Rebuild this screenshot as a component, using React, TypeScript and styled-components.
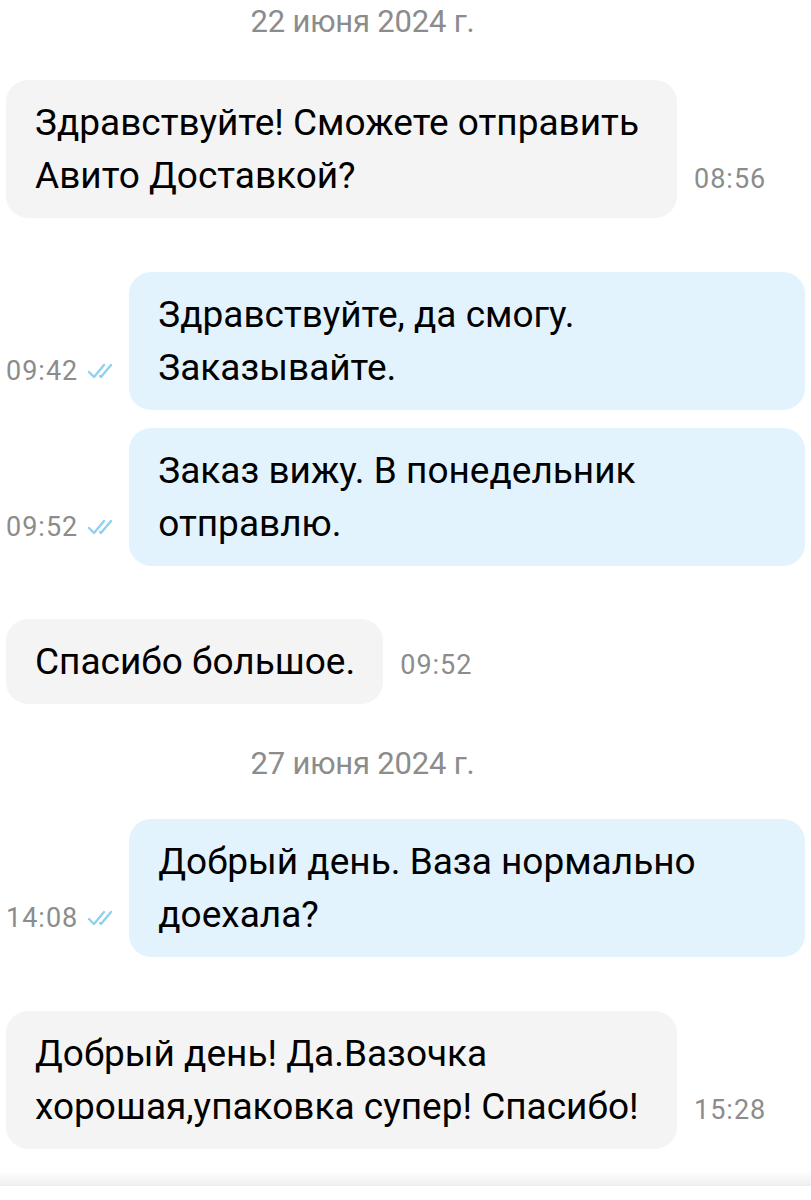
import * as React from "react";
import styled, { createGlobalStyle } from "styled-components";

const GlobalStyle = createGlobalStyle`
    html, body {
        margin: 0;
        padding: 0;
        background: #ffffff;
    }
    body {
        width: 811px;
        overflow: hidden;
        font-family: Roboto, "Noto Sans", sans-serif;
        -webkit-font-smoothing: antialiased;
    }
`;

const Chat = styled.div`
    display: flex;
    flex-direction: column;
    width: 811px;
    height: 1200px;
    box-sizing: border-box;
`;

const DateLabel = styled.div<{ $top: number; $bottom: number }>`
    margin: ${(p) => p.$top}px 0 ${(p) => p.$bottom}px;
    height: 44px;
    line-height: 44px;
    text-align: center;
    font-size: 31px;
    color: #8c8c8c;
    letter-spacing: -0.2px;
    padding-right: 86px;
`;

const Row = styled.div<{ $gap: number; $out?: boolean }>`
    display: flex;
    align-items: flex-end;
    margin-top: ${(p) => p.$gap}px;
    padding: 0 6px;
    flex-direction: ${(p) => (p.$out ? "row-reverse" : "row")};
`;

const Bubble = styled.div<{ $out?: boolean; $full?: boolean }>`
    box-sizing: border-box;
    max-width: ${(p) => (p.$out ? 676 : 671)}px;
    ${(p) => (p.$out ? "width: 676px;" : p.$full ? "width: 671px;" : "")}
    padding: 16px 28px 16px 29px;
    border-radius: 22px;
    background: ${(p) => (p.$out ? "#e3f3fd" : "#f4f4f4")};
    color: #000000;
    font-size: 37px;
    line-height: 53px;
    letter-spacing: 0;
`;

const Meta = styled.div<{ $out?: boolean }>`
    display: flex;
    align-items: center;
    gap: 9px;
    padding-bottom: 24px;
    ${(p) => (p.$out ? "margin-right: 12px;" : "margin-left: 17px;")}
    ${(p) => (p.$out ? "flex: 1; justify-content: flex-end;" : "")}
`;

const Time = styled.span`
    font-size: 27px;
    line-height: 30px;
    color: #8c8c8c;
    letter-spacing: 1px;
`;

const Footer = styled.div`
    margin-top: 22px;
    height: 15px;
    background: linear-gradient(#ffffff, #eeeeee);
`;

const Checks = () => (
    <svg width="30" height="18" viewBox="0 0 30 18" fill="none" stroke="#8fcff0" strokeWidth="2.3" strokeLinecap="round" strokeLinejoin="round">
        <path d="M2 10 L7 15 L17 3" />
        <path d="M13 14 L14 15 L24 3" />
    </svg>
);

interface IMessage {
    Text: React.ReactNode;
    Time: string;
    Out?: boolean;
    Full?: boolean;
    Gap: number;
}

const Message = ({ m }: { m: IMessage }) => (
    <Row $gap={m.Gap} $out={m.Out}>
        <Bubble $out={m.Out} $full={m.Full}>{m.Text}</Bubble>
        <Meta $out={m.Out}>
            <Time>{m.Time}</Time>
            {m.Out && <Checks />}
        </Meta>
    </Row>
);

const firstDay: IMessage[] = [
    { Text: <>Здравствуйте! Сможете отправить<br />Авито Доставкой?</>, Time: "08:56", Full: true, Gap: 0 },
    { Text: <>Здравствуйте, да смогу.<br />Заказывайте.</>, Time: "09:42", Out: true, Gap: 54 },
    { Text: <>Заказ вижу. В понедельник<br />отправлю.</>, Time: "09:52", Out: true, Gap: 18 },
    { Text: "Спасибо большое.", Time: "09:52", Gap: 53 },
];

const secondDay: IMessage[] = [
    { Text: <>Добрый день. Ваза нормально<br />доехала?</>, Time: "14:08", Out: true, Gap: 0 },
    { Text: <>Добрый день! Да.Вазочка<br />хорошая,упаковка супер! Спасибо!</>, Time: "15:28", Full: true, Gap: 54 },
];

export default function App() {
    return (
        <>
            <GlobalStyle />
            <Chat>
                <DateLabel $top={0} $bottom={36}>22 июня 2024 г.</DateLabel>
                {firstDay.map((m, i) => <Message key={i} m={m} />)}
                <DateLabel $top={38} $bottom={33}>27 июня 2024 г.</DateLabel>
                {secondDay.map((m, i) => <Message key={i} m={m} />)}
                <Footer />
            </Chat>
        </>
    );
}
